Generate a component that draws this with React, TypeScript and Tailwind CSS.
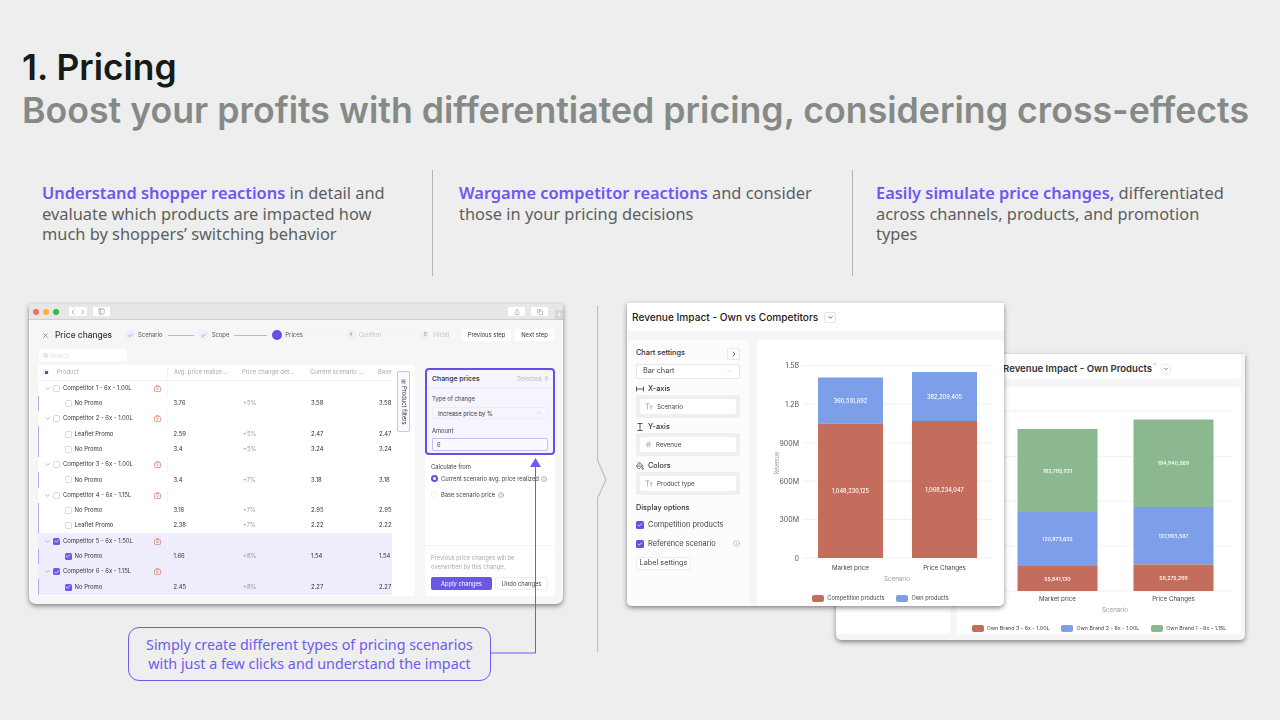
import { Check, ChevronDown, ChevronLeft, ChevronRight, Copy, Hash, Info, PaintBucket, PanelLeft, Plus, Search, Share, SlidersHorizontal, X } from 'lucide-react';

const INTER = 'font-["Inter",sans-serif]';

type Bar = { x: number; name: string; top: number; segs: { to: number; color: string; label: string }[] };

const RED = '#c46d5c';
const BLUE = '#7d9ee9';
const GREEN = '#8bb88e';

const ROWS = [
  { group: 'Competitor 1 - 6x - 1.00L', items: [['No Promo', '3.76', '+5%', '3.58', '3.58']] },
  { group: 'Competitor 2 - 6x - 1.00L', items: [['Leaflet Promo', '2.59', '+5%', '2.47', '2.47'], ['No Promo', '3.4', '+5%', '3.24', '3.24']] },
  { group: 'Competitor 3 - 6x - 1.00L', items: [['No Promo', '3.4', '+7%', '3.18', '3.18']] },
  { group: 'Competitor 4 - 6x - 1.15L', items: [['No Promo', '3.16', '+7%', '2.95', '2.95'], ['Leaflet Promo', '2.38', '+7%', '2.22', '2.22']] },
  { group: 'Competitor 5 - 6x - 1.50L', on: true, items: [['No Promo', '1.66', '+8%', '1.54', '1.54']] },
  { group: 'Competitor 6 - 6x - 1.15L', on: true, items: [['No Promo', '2.45', '+8%', '2.27', '2.27']] },
];

// small pink "promo box" marker on group rows
function PromoIcon() {
  return (
    <svg width="7" height="7" viewBox="0 0 7 7" fill="none" stroke="#d9806e" strokeWidth="0.7" className="ml-auto mr-[6px] shrink-0">
      <rect x="0.5" y="1.8" width="6" height="4.7" rx="0.6" />
      <path d="M2.3 1.8V0.6H4.7V1.8M2.5 3.2L4.5 5.2M4.5 3.2L2.5 5.2" />
    </svg>
  );
}

function TtIcon() {
  return (
    <svg width="8" height="7" viewBox="0 0 8 7" fill="none" stroke="#7d9ee9" strokeWidth="0.7" className="shrink-0">
      <path d="M0.3 0.8H4.7M2.5 0.8V6.5M4.6 3H7.8M6.2 3V6.5" />
    </svg>
  );
}

function Box({ on, className }: { on?: boolean; className: string }) {
  return on ? (
    <span className={`${className} flex h-[7px] w-[7px] shrink-0 items-center justify-center rounded-[1.5px] bg-[#6d5ae6]`}>
      <Check size={6} color="#fff" strokeWidth={3} />
    </span>
  ) : (
    <span className={`${className} block h-[7px] w-[7px] shrink-0 rounded-[1.5px] border-[0.5px] border-[#d9d9d9] bg-white`} />
  );
}

function PriceTable() {
  return (
    <div className="flex h-[231px] w-[377px] overflow-hidden rounded-[3px] bg-white text-[5.9px] text-[#333]">
      <div className="w-[354px] shrink-0 overflow-hidden">
        <div className="grid h-[15.5px] grid-cols-[130px_68px_68px_68px_20px] items-center whitespace-nowrap border-b-[0.5px] border-[#f2f2f2] text-[#aaa]">
          <div className="flex items-center border-r-[0.5px] border-[#f0f0f0] pl-[5px]">
            <span className="flex h-[6px] w-[6px] items-center justify-center rounded-[1px] bg-[#f0eefc]">
              <span className="h-[3px] w-[3px] bg-[#5b49e0]" />
            </span>
            <span className="ml-[8px]">Product</span>
          </div>
          <div className="pl-[6px]">Avg. price realize...</div>
          <div className="pl-[6px]">Price change det...</div>
          <div className="pl-[6px]">Current scenario ...</div>
          <div className="pl-[6px]">Base</div>
        </div>
        {ROWS.map((r) => (
          <div key={r.group} className={r.on ? 'bg-[#efedfb]' : ''}>
            <div className="flex h-[15.3px] w-[130px] items-center border-r-[0.5px] border-[#f5f5f5]">
              <ChevronDown size={7} className="ml-[5.5px] shrink-0 text-[#888]" />
              <Box on={r.on} className="ml-[2.5px]" />
              <span className="ml-[3px] whitespace-nowrap">{r.group}</span>
              <PromoIcon />
            </div>
            {r.items.map((it, i) => (
              <div key={i} className="grid h-[15.3px] grid-cols-[130px_68px_68px_68px_20px] items-center whitespace-nowrap border-l-[1.5px] border-[#b6a9f7]">
                <div className="flex items-center pl-[25.5px]">
                  <Box on={r.on} className="" />
                  <span className="ml-[3px]">{it[0]}</span>
                </div>
                <div className="pl-[4.5px]">{it[1]}</div>
                <div className="pl-[6px] text-[#999]">{it[2]}</div>
                <div className="pl-[6px]">{it[3]}</div>
                <div className="pl-[6px]">{it[4]}</div>
              </div>
            ))}
          </div>
        ))}
      </div>
      <div className="flex-1 pl-[5px] pt-[6px]">
        <div className="flex h-[61px] w-[13px] items-center justify-center rounded-[2px] border-[0.5px] border-[#c9c0f8] bg-[#faf9ff]">
          <span className="flex items-center gap-[2px] whitespace-nowrap text-[5.8px] [writing-mode:vertical-rl]">
            <SlidersHorizontal size={5} />
            Product filters
          </span>
        </div>
      </div>
    </div>
  );
}

function ChangePanel() {
  return (
    <div className="flex h-[228px] w-[130px] flex-col rounded-[3px] bg-white text-[5.8px] leading-[7px] text-[#444]">
      <div className="h-[87px] rounded-[4px] border-2 border-[#6450e6] bg-[#f6f5fe]">
        <div className="flex h-[18px] items-center justify-between border-b-[0.5px] border-[#eeecfa] px-[5px]">
          <span className="text-[6.8px] font-semibold">Change prices</span>
          <span className="text-[#bbb]">Selected: 9</span>
        </div>
        <div className="px-[5px] pt-[7px]">
          <div>Type of change</div>
          <div className="mt-[5px] flex h-[12px] items-center justify-between rounded-[2px] border-[0.5px] border-[#eee] px-[5px] text-[#333]">
            Increase price by %
            <ChevronDown size={6} className="text-[#bbb]" />
          </div>
          <div className="mt-[8px]">Amount</div>
          <div className="mt-[4px] flex h-[13px] items-center rounded-[2px] border border-[#c6bdf8] bg-[#f9f9fe] px-[4px]">6</div>
        </div>
      </div>
      <div className="px-[6px] pt-[8px]">
        <div>Calculate from</div>
        <div className="mt-[5px] flex items-center whitespace-nowrap">
          <span className="flex h-[7px] w-[7px] shrink-0 items-center justify-center rounded-full bg-[#6450e6]">
            <span className="h-[3px] w-[3px] rounded-full bg-white" />
          </span>
          <span className="ml-[3px]">Current scenario avg. price realized</span>
          <Info size={6} className="ml-[2px] shrink-0 text-[#777]" />
        </div>
        <div className="mt-[9px] flex items-center whitespace-nowrap">
          <span className="h-[7px] w-[7px] shrink-0 rounded-full border-[0.5px] border-[#eee]" />
          <span className="ml-[3px]">Base scenario price</span>
          <Info size={6} className="ml-[3px] shrink-0 text-[#777]" />
        </div>
      </div>
      <div className="mt-auto border-t-[0.5px] border-[#f3f3f3] px-[6px] pb-[6px] pt-[7px]">
        <div className="leading-[9px] text-[#aaa]">
          Previous price changes will be
          <br />
          overwritten by this change.
        </div>
        <div className="mt-[6px] flex gap-[3px] whitespace-nowrap">
          <span className="flex h-[13px] w-[61px] items-center justify-center rounded-[2px] bg-[#6a57e8] text-white">Apply changes</span>
          <span className="flex h-[13px] w-[53px] items-center justify-center rounded-[2px] border-[0.5px] border-[#eee]">Undo changes</span>
        </div>
      </div>
    </div>
  );
}

function Step({ label, mode, n }: { label: string; mode: 'done' | 'now' | 'todo'; n?: number }) {
  return (
    <span className="flex items-center gap-[3px] whitespace-nowrap">
      <span
        className={
          mode === 'done'
            ? 'flex h-[10px] w-[10px] items-center justify-center rounded-full bg-[#f0eefc] text-[#6450e6]'
            : mode === 'now'
              ? 'flex h-[10px] w-[10px] items-center justify-center rounded-full bg-[#6450e6] text-[5px] text-white'
              : 'flex h-[10px] w-[10px] items-center justify-center rounded-full bg-[#f0f0f0] text-[5px] text-[#999]'
        }
      >
        {mode === 'done' ? <Check size={5} strokeWidth={2.5} /> : n}
      </span>
      <span className={mode === 'todo' ? 'text-[#c4c4c4]' : 'text-[#555]'}>{label}</span>
    </span>
  );
}

function PriceWindow() {
  return (
    <div className="h-[300px] w-[534px] overflow-hidden rounded-b-[7px] bg-[#f6f6f6] shadow-[0_2px_5px_rgba(0,0,0,0.45)]">
      <div className="flex h-[16px] items-center border-b border-[#cfcfcf] bg-[#e7e7e7] pl-[4px] blur-[0.3px]">
        <span className="h-[6px] w-[6px] rounded-full bg-[#fb6a6a]" />
        <span className="ml-[4px] h-[6px] w-[6px] rounded-full bg-[#fcb22e]" />
        <span className="ml-[4px] h-[6px] w-[6px] rounded-full bg-[#27c03f]" />
        <span className="ml-[10px] flex h-[9px] w-[18px] items-center justify-between rounded-[1px] bg-white text-[#888]">
          <ChevronLeft size={8} />
          <ChevronRight size={8} />
        </span>
        <span className="ml-[6px] flex h-[9px] w-[17px] items-center justify-center rounded-[1px] bg-white text-[#888]">
          <PanelLeft size={7} />
        </span>
        <span className="ml-auto flex h-[9px] w-[17px] items-center justify-center rounded-[1px] bg-white text-[#888]">
          <Share size={6} />
        </span>
        <span className="ml-[6px] flex h-[9px] w-[17px] items-center justify-center rounded-[1px] bg-white text-[#888]">
          <Copy size={6} />
        </span>
        <span className="ml-[7px] flex h-[9px] w-[8px] items-center justify-center self-end bg-[#d5d5d5] text-white">
          <Plus size={7} />
        </span>
      </div>
      <div className={`${INTER} blur-[0.3px]`}>
        <div className="flex h-[30px] items-center whitespace-nowrap pl-[13px] pr-[9px] text-[5.9px]">
          <X size={7} className="shrink-0 text-[#555]" />
          <span className="ml-[6px] w-[70px] shrink-0 text-[8.4px] font-medium text-[#333]">Price changes</span>
          <Step label="Scenario" mode="done" />
          <span className="mx-[5px] h-[1px] w-[26px] bg-[#b9aefc]" />
          <Step label="Scope" mode="done" />
          <span className="mx-[5px] h-[1px] w-[33px] bg-[#b9aefc]" />
          <Step label="Prices" mode="now" />
          <span className="mx-[5px] h-[1px] w-[33px] bg-[#f3f3f3]" />
          <Step label="Confirm" mode="todo" n={4} />
          <span className="mx-[5px] h-[1px] w-[29px] bg-[#f3f3f3]" />
          <Step label="Finish" mode="todo" n={5} />
          <span className="ml-auto flex h-[12px] w-[49px] items-center justify-center rounded-[2px] bg-white text-[#333]">Previous step</span>
          <span className="ml-[4px] flex h-[12px] w-[39px] items-center justify-center rounded-[2px] bg-white text-[#333]">Next step</span>
        </div>
        <div className="-mt-[1px] ml-[10px] flex h-[12px] w-[88px] items-center gap-[2px] rounded-[2px] bg-white pl-[4px] text-[6px] text-[#ddd]">
          <Search size={5} className="text-[#999]" />
          Search
        </div>
        <div className="ml-[9px] mt-[4px] flex gap-[10px]">
          <PriceTable />
          <div className="pt-[3px]">
            <ChangePanel />
          </div>
        </div>
      </div>
    </div>
  );
}

function BarChart({ w, h, grid, gridX, bars, barW, labelY, axisY, axisLabels, axisX, font }: {
  w: number; h: number; grid: number[]; gridX: [number, number]; bars: Bar[]; barW: number; labelY: number;
  axisY: [number, number]; axisLabels?: string[]; axisX: number; font: number;
}) {
  return (
    <svg width={w} height={h} viewBox={`0 0 ${w} ${h}`} className="block" fontFamily="Inter, sans-serif">
      {grid.map((y) => (
        <line key={y} x1={gridX[0]} x2={gridX[1]} y1={y} y2={y} stroke="#f1f1f1" />
      ))}
      {axisLabels?.map((l, i) => (
        <text key={l} x={axisX} y={grid[i] + 2.5} fontSize={7} fill="#555" textAnchor="end">{l}</text>
      ))}
      {bars.map((b) => {
        let y = b.top;
        return (
          <g key={b.name}>
            {b.segs.map((s) => {
              const y0 = y;
              y = s.to;
              return (
                <g key={s.label}>
                  <rect x={b.x} y={y0} width={barW} height={s.to - y0} fill={s.color} />
                  <text x={b.x + barW / 2} y={(y0 + s.to) / 2 + 2} fontSize={font} fill="#fff" textAnchor="middle" fontWeight={500}>{s.label}</text>
                </g>
              );
            })}
            <text x={b.x + barW / 2} y={labelY} fontSize={6.2} fill="#444" textAnchor="middle">{b.name}</text>
          </g>
        );
      })}
      <text x={axisY[0]} y={axisY[1]} fontSize={6.2} fill="#999" textAnchor="middle">Scenario</text>
    </svg>
  );
}

function Legend({ items, className }: { items: [string, string][]; className: string }) {
  return (
    <div className={`${className} flex items-center justify-center gap-[12px] whitespace-nowrap text-[#444]`}>
      {items.map(([c, l]) => (
        <span key={l} className="flex items-center gap-[3px]">
          <span className="h-[7px] w-[12px] rounded-[2px]" style={{ background: c }} />
          {l}
        </span>
      ))}
    </div>
  );
}

function Field({ icon, label }: { icon: React.ReactNode; label: string }) {
  return (
    <div className="rounded-[3px] bg-[#efefef] p-[4px]">
      <div className="flex h-[15px] items-center gap-[4px] rounded-[2px] bg-white pl-[5px] text-[6.2px] text-[#444]">
        {icon}
        {label}
      </div>
    </div>
  );
}

function AxisHead({ icon, label }: { icon: React.ReactNode; label: string }) {
  return (
    <div className="flex h-[12px] items-center gap-[4px] text-[7.3px] font-medium text-[#333]">
      {icon}
      {label}
    </div>
  );
}

function SideCheck({ label, info }: { label: string; info?: boolean }) {
  return (
    <div className="flex h-[19px] items-center gap-[4px] text-[7.4px] text-[#444]">
      <span className="flex h-[8px] w-[8px] items-center justify-center rounded-[1.5px] bg-[#6450e6]">
        <Check size={6} color="#fff" strokeWidth={3} />
      </span>
      {label}
      {info && <Info size={7} className="ml-auto text-[#aaa]" />}
    </div>
  );
}

function ChartSettings() {
  return (
    <div className="h-[266px] w-[122px] rounded-l-[3px] bg-[#fcfcfc] px-[9px] pt-[7px]">
      <div className="flex h-[13px] items-center justify-between text-[7.3px] font-medium text-[#333]">
        Chart settings
        <span className="flex h-[12px] w-[13px] items-center justify-center rounded-[2px] border-[0.5px] border-[#e8e8e8] bg-white">
          <ChevronRight size={8} />
        </span>
      </div>
      <div className="mt-[4px] flex h-[15px] items-center justify-between rounded-[2px] border-[0.5px] border-[#e8e8e8] bg-white px-[6px] text-[7.3px] text-[#444]">
        Bar chart
        <ChevronDown size={7} className="text-[#bbb]" />
      </div>
      <div className="mt-[4px]">
        <AxisHead label="X-axis" icon={
          <svg width="8" height="8" viewBox="0 0 8 8" fill="none" stroke="#333" strokeWidth="0.8"><path d="M0.5 1.5v5M7.5 1.5v5M0.5 4h7" /></svg>
        } />
      </div>
      <Field label="Scenario" icon={<TtIcon />} />
      <div className="mt-[3px]">
        <AxisHead label="Y-axis" icon={
          <svg width="8" height="8" viewBox="0 0 8 8" fill="none" stroke="#333" strokeWidth="0.8"><path d="M1.5 0.5h5M1.5 7.5h5M4 0.5v7" /></svg>
        } />
      </div>
      <Field label="Revenue" icon={<Hash size={7} className="shrink-0 text-[#8bb88e]" />} />
      <div className="mt-[4px]">
        <AxisHead label="Colors" icon={<PaintBucket size={8} className="text-[#333]" />} />
      </div>
      <Field label="Product type" icon={<TtIcon />} />
      <div className="mt-[8px] text-[7.3px] font-medium text-[#333]">Display options</div>
      <div className="mt-[1.5px]">
        <SideCheck label="Competition products" />
        <SideCheck label="Reference scenario" info />
      </div>
      <div className="mt-[4px] flex h-[13px] w-[55px] items-center justify-center rounded-[2px] border-[0.5px] border-[#eee] bg-white text-[7.3px] text-[#444]">
        Label settings
      </div>
    </div>
  );
}

function OwnVsCompetitors() {
  return (
    <div className={`${INTER} absolute left-0 top-0 z-10 h-[303px] w-[377px] overflow-hidden rounded-b-[5px] bg-[#f6f6f6] shadow-[0_2px_5px_rgba(0,0,0,0.45)] blur-[0.2px]`}>
      <div className="flex h-[28px] items-center gap-[6px] rounded-b-[3px] bg-white pl-[5px] pt-[1px]">
        <span className="text-[10.15px] font-medium text-[#222]">Revenue Impact - Own vs Competitors</span>
        <span className="flex h-[11px] w-[12px] items-center justify-center rounded-[2px] border-[0.5px] border-[#e5e5e5]">
          <ChevronDown size={7} />
        </span>
      </div>
      <div className="mt-[9px] flex gap-[8px]">
        <ChartSettings />
        <div className="relative h-[266px] w-[247px] rounded-[3px] bg-white">
          <BarChart
            w={247}
            h={250}
            grid={[25.7, 64, 103, 141, 179.5, 218]}
            gridX={[46, 235]}
            axisLabels={['1.5B', '1.2B', '900M', '600M', '300M', '0']}
            axisX={42}
            axisY={[140, 241]}
            barW={65}
            labelY={230}
            font={5.6}
            bars={[
              { x: 61, name: 'Market price', top: 37.5, segs: [{ to: 83.5, color: BLUE, label: '360,510,692' }, { to: 218, color: RED, label: '1,048,230,125' }] },
              { x: 155, name: 'Price Changes', top: 32, segs: [{ to: 81, color: BLUE, label: '382,209,405' }, { to: 218, color: RED, label: '1,068,234,047' }] },
            ]}
          />
          <span className="absolute left-[9px] top-[119px] origin-center -rotate-90 text-[5.6px] text-[#999]">Revenue</span>
          <div className="mt-[4px]">
            <Legend className="text-[5.6px]" items={[[RED, 'Competition products'], [BLUE, 'Own products']]} />
          </div>
        </div>
      </div>
    </div>
  );
}

function OwnProducts() {
  return (
    <div className={`${INTER} absolute left-[209px] top-[51px] h-[286px] w-[409px] overflow-hidden rounded-b-[5px] bg-[#f6f6f6] shadow-[0_2px_5px_rgba(0,0,0,0.45)] blur-[0.3px]`}>
      <div className="mr-[4px] flex h-[25px] items-center gap-[5px] rounded-[3px] bg-white pl-[167px] pt-[5px]">
        <span className="text-[9.6px] font-semibold text-[#333]">Revenue Impact - Own Products</span>
        <span className="-ml-[4px] mb-[7px] text-[6px] leading-none text-[#e8956f]">*</span>
        <span className="flex h-[10px] w-[10px] items-center justify-center rounded-[2px] border-[0.5px] border-[#eee]">
          <ChevronDown size={6} />
        </span>
      </div>
      <div className="mt-[8px] flex h-[247px] gap-[7px] pr-[4px]">
        <div className="w-[114px] shrink-0 rounded-[3px] bg-white" />
        <div className="relative min-w-0 flex-1 rounded-[3px] bg-white">
          <BarChart
            w={284}
            h={230}
            grid={[24, 69.5, 114, 159, 204]}
            gridX={[45, 275]}
            axisX={0}
            axisY={[158, 225]}
            barW={80}
            labelY={214}
            font={5.2}
            bars={[
              { x: 60.5, name: 'Market price', top: 42, segs: [{ to: 125, color: GREEN, label: '183,795,931' }, { to: 179, color: BLUE, label: '120,873,632' }, { to: 204, color: RED, label: '55,841,130' }] },
              { x: 176.5, name: 'Price Changes', top: 32.5, segs: [{ to: 120, color: GREEN, label: '194,940,569' }, { to: 177.5, color: BLUE, label: '127,993,567' }, { to: 204, color: RED, label: '59,275,299' }] },
            ]}
          />
          <div className="mt-[8px]">
            <Legend className="text-[5.3px]" items={[[RED, 'Own Brand 3 - 6x - 1.00L'], [BLUE, 'Own Brand 2 - 6x - 1.00L'], [GREEN, 'Own Brand 1 - 6x - 1.15L']]} />
          </div>
        </div>
      </div>
    </div>
  );
}

function Lead({ head, rest, className }: { head: string; rest: React.ReactNode; className: string }) {
  return (
    <div className={className}>
      <p className='font-["Noto_Sans",sans-serif] text-[16.4px] leading-[20.5px] text-[#5c5f5e]'>
        <span className="font-semibold text-[#6d56f5]">{head}</span> {rest}
      </p>
    </div>
  );
}

export default function App() {
  return (
    <div className="relative h-[720px] w-[1280px] overflow-hidden bg-[#eeeeee]">
      <div className={`${INTER} pl-[22px] pt-[48px] font-semibold`}>
        <h1 className="text-[35.4px] leading-[40px] text-[#161a18]">1. Pricing</h1>
        <h2 className="mt-[4px] whitespace-nowrap text-[35.7px] leading-[37px] text-[#858a87]">Boost your profits with differentiated pricing, considering cross-effects</h2>
      </div>

      <div className="mt-[41px] flex h-[106px]">
        <Lead
          className="h-full w-[433px] border-r border-[#b5b5b5] pl-[42px] pr-[40px] pt-[13px]"
          head="Understand shopper reactions"
          rest="in detail and evaluate which products are impacted how much by shoppers’ switching behavior"
        />
        <Lead
          className="h-full w-[420px] border-r border-[#b5b5b5] pl-[26px] pr-[30px] pt-[13px]"
          head="Wargame competitor reactions"
          rest="and consider those in your pricing decisions"
        />
        <Lead
          className="h-full w-[400px] pl-[23px] pr-[20px] pt-[13px]"
          head="Easily simulate price changes,"
          rest="differentiated across channels, products, and promotion types"
        />
      </div>

      <div className="mt-[27px] flex">
        <div className="ml-[29px] mt-[1px] w-[534px]">
          <PriceWindow />
          <div className='ml-[99px] mt-[23px] flex h-[54px] w-[363px] items-center justify-center rounded-[11px] border border-[#6d5cf0] text-center font-["Noto_Sans",sans-serif] text-[14.3px] leading-[19px] text-[#6d5cf0]'>
            <span>
              Simply create different types of pricing scenarios
              <br />
              with just a few clicks and understand the impact
            </span>
          </div>
        </div>

        <svg width="12" height="346" viewBox="0 0 12 346" className="ml-[34px] mt-[3px] shrink-0" fill="none" stroke="#bdbdbd" strokeWidth="1.2">
          <path d="M0.5 0V154L9 174L0.5 192V346" />
        </svg>

        <div className="relative ml-[18px] h-[337px] w-[618px]">
          <OwnProducts />
          <OwnVsCompetitors />
        </div>
      </div>

      <svg width="1280" height="720" className="pointer-events-none absolute left-0 top-0 z-20" fill="none">
        <path d="M535.5 465V653H491" stroke="#6d5cf0" />
        <path d="M535.5 458L530 467H541Z" fill="#6d5cf0" />
      </svg>
    </div>
  );
}
